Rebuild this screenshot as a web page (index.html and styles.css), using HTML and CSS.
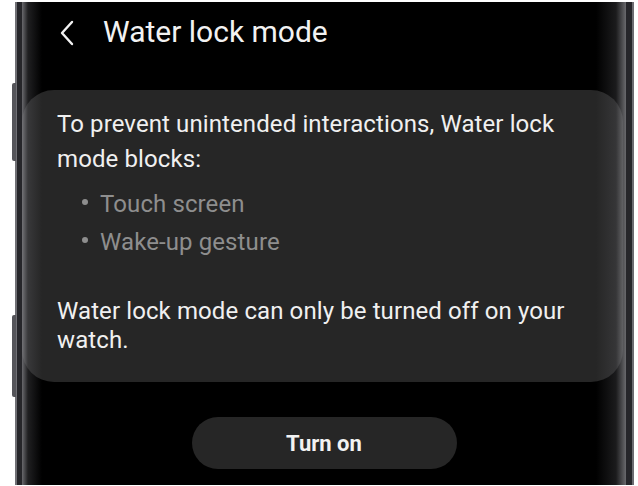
FILE: index.html
```html
<!DOCTYPE html>
<html lang="en">
<head>
<meta charset="utf-8">
<title>Water lock mode</title>
<link rel="stylesheet" href="styles.css">
</head>
<body>
<div class="device">
  <span class="side-btn side-btn-top"></span>
  <span class="side-btn side-btn-bottom"></span>
  <div class="screen">
    <header class="header">
      <svg class="back" width="16" height="26" viewBox="0 0 16 26" aria-hidden="true">
        <polyline points="13,2 3,13 13,24" fill="none" stroke="#f2f2f2" stroke-width="2.4" stroke-linecap="round" stroke-linejoin="round"/>
      </svg>
      <h1 class="title">Water lock mode</h1>
    </header>
    <section class="card">
      <p class="lead">To prevent unintended interactions, Water lock mode blocks:</p>
      <ul class="list">
        <li>Touch screen</li>
        <li>Wake-up gesture</li>
      </ul>
      <p class="note">Water lock mode can only be turned off on your watch.</p>
    </section>
    <div class="actions">
      <button class="btn" type="button">Turn on</button>
    </div>
  </div>
</div>
</body>
</html>
```

FILE: styles.css
```css
* { box-sizing: border-box; }

html, body {
  margin: 0;
  padding: 0;
  background: #ffffff;
}

body {
  width: 638px;
  height: 486px;
  overflow: hidden;
  font-family: Roboto, "Noto Sans", "Liberation Sans", sans-serif;
}

.device {
  position: relative;
  margin: 2px 4px 0 15px;
  height: 483px;
  background: #26262a;
  border-left: 2px solid #707075;
  border-right: 2px solid #6c6c71;
  padding: 0 6px 0 5px;
  display: flex;
}

.side-btn {
  position: absolute;
  left: -5px;
  width: 4px;
  background: #55555a;
  border-radius: 2px 0 0 2px;
}
.side-btn-top { top: 81px; height: 78px; }
.side-btn-bottom { top: 313px; height: 82px; }

.screen {
  position: relative;
  flex: 1;
  background: #000;
  display: flex;
  flex-direction: column;
  overflow: hidden;
}

.screen::after {
  content: "";
  position: absolute;
  inset: 0;
  pointer-events: none;
  background: linear-gradient(to right,
    rgba(140,140,145,0.75) 0px,
    rgba(90,90,95,0.35) 6px,
    rgba(40,40,40,0.0) 20px,
    rgba(40,40,40,0.0) calc(100% - 30px),
    rgba(90,90,95,0.3) calc(100% - 10px),
    rgba(150,150,155,0.7) 100%);
}

.header {
  height: 88px;
  display: flex;
  align-items: flex-start;
  padding: 12px 0 0 37px;
  gap: 28px;
}

.back {
  margin-top: 6px;
  flex: none;
}

.title {
  margin: 0;
  font-size: 30px;
  line-height: 36px;
  font-weight: 400;
  color: #f2f2f2;
}

.card {
  height: 292px;
  margin-right: 3px;
  background: #262626;
  border-radius: 32px;
  padding: 17px 26px 0 35px;
  color: #f0f0f0;
}

.lead {
  margin: 0;
  font-size: 24px;
  line-height: 35px;
  letter-spacing: 0.1px;
}

.list {
  list-style: none;
  margin: 8px 0 0 0;
  padding: 0 0 0 25px;
  color: #8e8e8e;
  font-size: 24px;
  line-height: 38px;
  letter-spacing: 0.1px;
}

.list li {
  display: flex;
  align-items: center;
  gap: 12px;
}

.list li::before {
  content: "";
  width: 6px;
  height: 6px;
  border-radius: 50%;
  background: #8e8e8e;
  flex: none;
  margin-top: -4px;
}

.note {
  margin: 36px 0 0 0;
  font-size: 24px;
  line-height: 29px;
  letter-spacing: 0.1px;
}

.actions {
  display: flex;
  justify-content: center;
  padding-top: 35px;
}

.btn {
  width: 265px;
  height: 52px;
  border: none;
  border-radius: 26px;
  background: #262626;
  color: #f2f2f2;
  font-family: Roboto, "Noto Sans", "Liberation Sans", sans-serif;
  font-size: 22px;
  font-weight: 700;
  padding: 0;
}
```
